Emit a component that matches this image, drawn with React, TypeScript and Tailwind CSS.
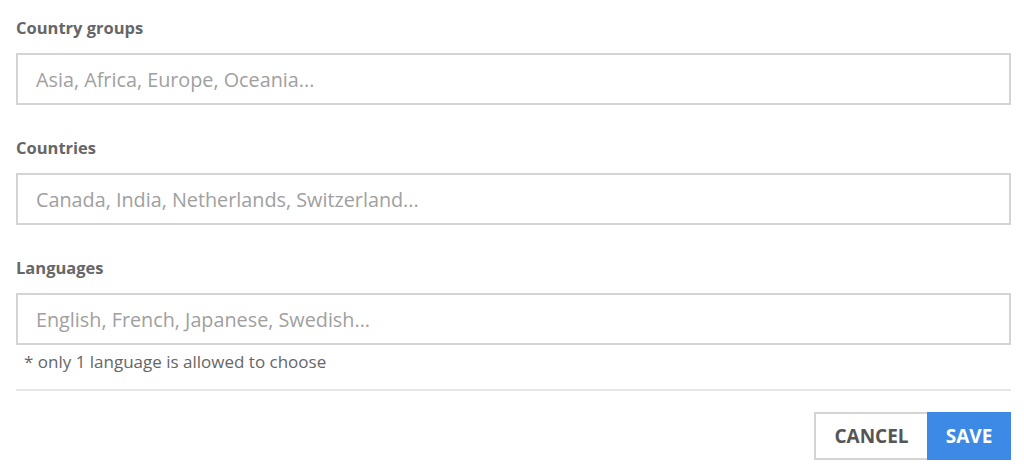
const fields = [
  { label: "Country groups", placeholder: "Asia, Africa, Europe, Oceania..." },
  { label: "Countries", placeholder: "Canada, India, Netherlands, Switzerland..." },
  { label: "Languages", placeholder: "English, French, Japanese, Swedish..." },
];

export default function App() {
  return (
    <div className="min-h-[476px] w-[1024px] bg-white px-4 pt-[18px] font-['Open_Sans',sans-serif]">
      {fields.map((f, i) => (
        <div key={f.label} className={i === 0 ? "" : "mt-[33px]"}>
          <label className="block text-[16.5px] leading-5 font-bold text-[#666]">{f.label}</label>
          <input
            type="text"
            placeholder={f.placeholder}
            className="mt-[15px] block h-[52px] w-[995px] border-2 border-[#d4d4d8] px-[18px] text-[19.8px] text-[#555] outline-none placeholder:text-[#a0a0a0]"
          />
        </div>
      ))}
      <p className="mt-[7px] pl-[8px] text-[17px] leading-5 text-[#666]">* only 1 language is allowed to choose</p>
      <hr className="mt-[17px] w-[995px] border-t-2 border-[#e6e6e6]" />
      <div className="mt-[21px] flex w-[995px] justify-end">
        <button className="h-[48px] w-[113px] border-2 border-r-0 border-[#d4d4d4] bg-white text-[19px] font-bold text-[#555]">
          CANCEL
        </button>
        <button className="h-[48px] w-[84px] bg-[#3c8ae5] text-[19px] font-bold text-white">SAVE</button>
      </div>
    </div>
  );
}
